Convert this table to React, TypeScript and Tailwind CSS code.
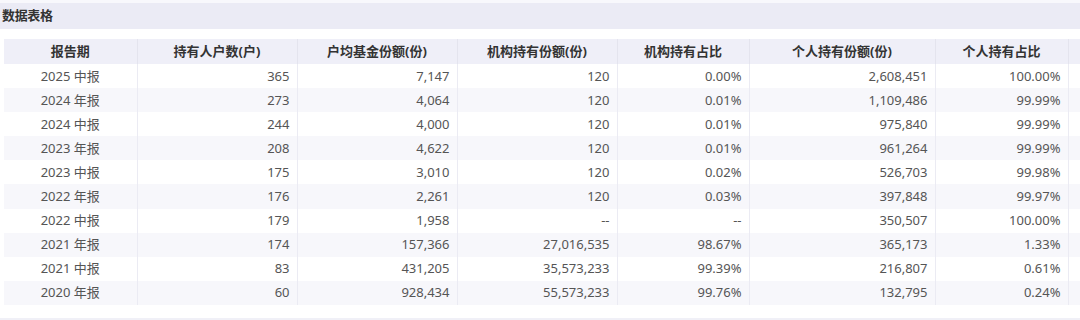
import React from "react";

const columns = [
  { title: "报告期", width: "w-[133px]", align: "text-center" },
  { title: "持有人户数(户)", width: "w-[160px]", align: "text-right" },
  { title: "户均基金份额(份)", width: "w-[160px]", align: "text-right" },
  { title: "机构持有份额(份)", width: "w-[160px]", align: "text-right" },
  { title: "机构持有占比", width: "w-[132px]", align: "text-right" },
  { title: "个人持有份额(份)", width: "w-[186px]", align: "text-right" },
  { title: "个人持有占比", width: "w-[133px]", align: "text-right" },
  { title: "", width: "w-[120px]", align: "text-right" },
];

const rows = [
  ["2025 中报", "365", "7,147", "120", "0.00%", "2,608,451", "100.00%"],
  ["2024 年报", "273", "4,064", "120", "0.01%", "1,109,486", "99.99%"],
  ["2024 中报", "244", "4,000", "120", "0.01%", "975,840", "99.99%"],
  ["2023 年报", "208", "4,622", "120", "0.01%", "961,264", "99.99%"],
  ["2023 中报", "175", "3,010", "120", "0.02%", "526,703", "99.98%"],
  ["2022 年报", "176", "2,261", "120", "0.03%", "397,848", "99.97%"],
  ["2022 中报", "179", "1,958", "--", "--", "350,507", "100.00%"],
  ["2021 年报", "174", "157,366", "27,016,535", "98.67%", "365,173", "1.33%"],
  ["2021 中报", "83", "431,205", "35,573,233", "99.39%", "216,807", "0.61%"],
  ["2020 年报", "60", "928,434", "55,573,233", "99.76%", "132,795", "0.24%"],
];

export default function App() {
  return (
    <div className="w-[1080px] h-[320px] overflow-hidden bg-white font-['Noto_Sans','Noto_Sans_CJK_SC',sans-serif] text-[13px]">
      <div className="h-[3px] bg-[#f8f8fc]" />
      {/* 标题栏 */}
      <div className="h-[26px] bg-[#ebebf5] flex items-center pl-[2px]">
        <span className="font-bold text-[13px] text-[#333] tracking-tight">数据表格</span>
      </div>

      <div className="pt-[10px] pl-[4px] h-[287px] overflow-hidden">
        <table className="border-collapse table-fixed w-[1184px]">
          <colgroup>
            {columns.map((col, i) => (
              <col key={i} className={col.width} />
            ))}
          </colgroup>
          <thead>
            <tr className="bg-[#efeff8] h-[25px]">
              {columns.map((col, i) => (
                <th
                  key={i}
                  className="p-0 text-center font-bold text-[13px] text-[#333] border-r border-[#e4e4ee] leading-none"
                >
                  {col.title}
                </th>
              ))}
            </tr>
          </thead>
          <tbody>
            {rows.map((row, r) => (
              <tr key={r} className={`h-[24.1px] ${r % 2 === 1 ? "bg-[#f7f7fb]" : "bg-white"}`}>
                {columns.map((col, c) => (
                  <td
                    key={c}
                    className={`${col.align} p-0 ${c === 0 ? "" : "pr-[7px]"} text-[#555] border-r border-[#ebebf3] leading-none`}
                  >
                    {row[c] ?? ""}
                  </td>
                ))}
              </tr>
            ))}
          </tbody>
        </table>
      </div>
      <div className="mt-[2px] h-[10px] bg-[#f0f0f7]" />
    </div>
  );
}
